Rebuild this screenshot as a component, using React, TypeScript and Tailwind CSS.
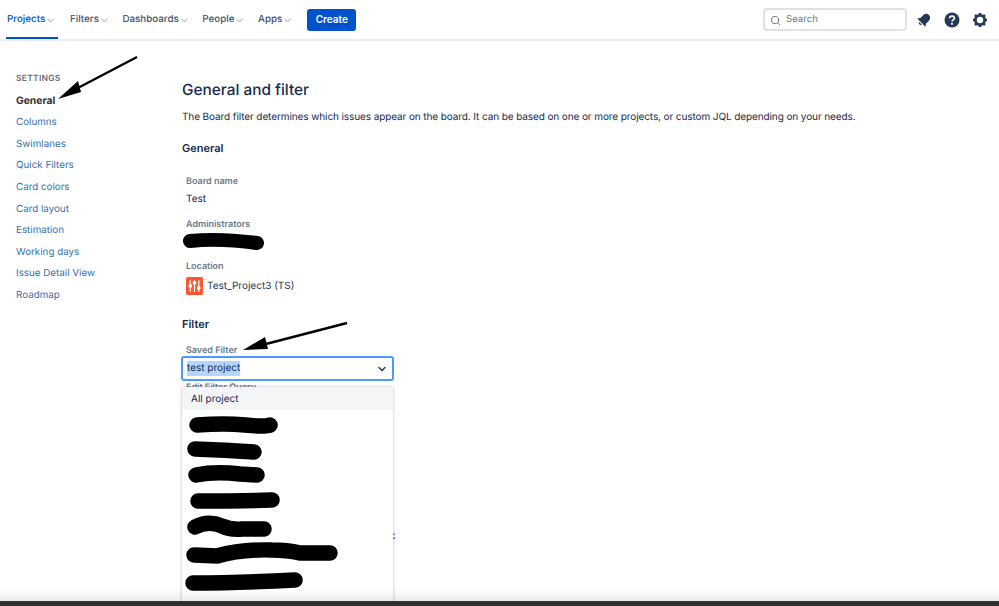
import { ChevronDown, Search } from 'lucide-react'

const navItems = [
	{ name: 'Projects', active: true },
	{ name: 'Filters' },
	{ name: 'Dashboards' },
	{ name: 'People' },
	{ name: 'Apps' },
]

const settingsLinks = ['Columns', 'Swimlanes', 'Quick Filters', 'Card colors', 'Card layout', 'Estimation', 'Working days', 'Issue Detail View', 'Roadmap']

// redacted rows in the open dropdown, coordinates relative to the menu
const scribbles = [
	'M15 39 Q43 37 63 39 T88 39',
	'M13 63 Q43 64 72 66',
	'M14 89 Q33 85 58 88 L75 89',
	'M16 115 Q58 115 90 114',
	'M13 141 Q26 134 40 140 Q48 144 60 143 L82 143',
	'M12 169 L35 170 Q60 163 90 164 Q105 164 118 167 L148 167',
	'M11 197 Q58 197 113 194',
]

function Field({ label, children }: { label: string; children: React.ReactNode }) {
	return (
		<div className="pl-1">
			<div className="text-[9px] leading-[14px] font-semibold text-[#6b778c]">{label}</div>
			{children}
		</div>
	)
}

export default function App() {
	return (
		<div className="relative h-[606px] w-[999px] overflow-hidden bg-white font-['Inter',sans-serif] [text-rendering:geometricPrecision] antialiased flex flex-col">
			{/* top nav */}
			<header className="h-[41px] shrink-0 flex items-center pl-1.5 pr-[11px] border-b-2 border-[#ebecf0]">
				<nav className="flex items-center h-full gap-[12.5px]">
					{navItems.map((item) => (
						<div
							key={item.name}
							className={
								item.active
									? 'h-full flex items-center pl-px pt-[3px] border-b-2 border-[#0052cc] w-[51.5px] text-[#0052cc] text-[9.8px] font-medium'
									: 'h-full flex items-center pt-[2px] text-[#42526e] text-[9.8px] font-medium'
							}
						>
							{item.name}
							<ChevronDown className="w-[11px] h-[11px] opacity-60 shrink-0" strokeWidth={2} />
						</div>
					))}
				</nav>
				<button className="ml-[14px] w-[49px] h-[22px] rounded-[3px] bg-[#0052cc] text-white text-[10px] font-semibold">Create</button>
				<div className="ml-auto w-[144px] h-[23px] flex items-center gap-[5px] pl-[5px] pt-px rounded-[4px] border-2 border-[#dfe1e6] text-[#6b778c] text-[9.6px]">
					<Search className="w-[11px] h-[11px] text-[#5e6c84]" strokeWidth={2} />
					Search
				</div>
				<div className="flex items-center ml-[9px] gap-3 text-[#253858]">
					<svg viewBox="0 0 16 16" className="w-4 h-4">
						<g transform="rotate(45 8 8)" fill="currentColor">
							<path d="M8 1 C5.2 1 4 3.2 4 5.6 V9 L2.2 11.8 H13.8 L12 9 V5.6 C12 3.2 10.8 1 8 1 Z" />
							<path d="M6.2 12.8 H9.8 C9.6 15 6.4 15 6.2 12.8 Z" />
						</g>
					</svg>
					<svg viewBox="0 0 16 16" className="w-4 h-4">
						<circle cx="8" cy="8" r="7.5" fill="currentColor" />
						<path d="M5.6 6.2 C5.7 3.4 10.4 3.4 10.4 6.2 C10.4 8 8 7.8 8 9.6" fill="none" stroke="white" strokeWidth="1.7" />
						<circle cx="8" cy="11.8" r="1.1" fill="white" />
					</svg>
					<svg viewBox="0 0 16 16" className="w-4 h-4" fill="none" stroke="currentColor">
						<circle cx="8" cy="8" r="4.6" strokeWidth="2.8" />
						<path
							strokeWidth="2.6"
							d="M8 1 V3.5 M8 12.5 V15 M1 8 H3.5 M12.5 8 H15 M3 3 L4.8 4.8 M11.2 11.2 L13 13 M13 3 L11.2 4.8 M4.8 11.2 L3 13"
						/>
					</svg>
				</div>
			</header>

			<div className="flex-1 flex min-h-0">
				{/* settings sidebar */}
				<aside className="w-[182px] shrink-0 pl-4 pt-[32px]">
					<div className="text-[8.5px] leading-[12px] font-semibold tracking-[0.03em] text-[#6b6f76]">SETTINGS</div>
					<div className="mt-[9px] text-[10.3px] leading-[14px] font-bold text-[#333]">General</div>
					<ul className="mt-[8px] space-y-[7.65px]">
						{settingsLinks.map((link) => (
							<li key={link} className="text-[9.8px] leading-[14px] text-[#3572b0]">
								{link}
							</li>
						))}
					</ul>
				</aside>

				{/* main content */}
				<main className="flex-1 pt-[38px]">
					<h1 className="text-[15.4px] leading-[22px] font-medium text-[#172b4d]">General and filter</h1>
					<p className="mt-[9px] text-[10px] leading-[14px] tracking-[-0.1px] text-[#172b4d]">
						The Board filter determines which issues appear on the board. It can be based on one or more projects, or custom JQL depending on your needs.
					</p>
					<h2 className="mt-[16px] text-[11px] leading-[16px] font-semibold text-[#172b4d]">General</h2>

					<div className="mt-[19px] flex flex-col gap-3">
						<Field label="Board name">
							<div className="mt-[3px] text-[10px] leading-[14px] text-[#172b4d]">Test</div>
						</Field>
						<Field label="Administrators">
							<svg viewBox="0 0 84 15" className="w-[84px] h-[15px] -ml-[5px] mt-px overflow-visible">
								<path d="M9 8 Q38 5 76 10" fill="none" stroke="black" strokeWidth="14" strokeLinecap="round" />
							</svg>
						</Field>
						<Field label="Location">
							<div className="mt-[3px] flex items-center gap-1 text-[10px] leading-[18px] text-[#253858]">
								<svg viewBox="0 0 18 18" className="w-[17px] h-[18px] rounded-[2px] bg-[#ff5630]">
									<g stroke="white" strokeWidth="1.3">
										<path d="M4.5 3 V15 M9 3 V15 M13.5 3 V15" />
									</g>
									<g fill="white">
										<circle cx="4.5" cy="9" r="2" />
										<circle cx="9" cy="5.5" r="2" />
										<circle cx="13.5" cy="11" r="2" />
									</g>
								</svg>
								Test_Project3 (TS)
							</div>
						</Field>
					</div>

					<h2 className="mt-[21px] text-[11px] leading-[16px] font-semibold text-[#172b4d]">Filter</h2>
					<div className="mt-[12px] pl-1 text-[9px] leading-[14px] font-semibold text-[#6b778c]">Saved Filter</div>
					<div className="relative -mt-[2px] -ml-px w-[213px]">
						<div className="h-[25px] flex items-center justify-between px-[4px] rounded-[3px] border-2 border-[#4c9aff] text-[10px] text-[#172b4d]">
							<span className="bg-[#b4d5fe]">test project</span>
							<ChevronDown className="w-3 h-3 text-[#253858]" strokeWidth={3} />
						</div>
						<div className="pl-[5px] text-[9px] leading-[14px] font-semibold text-[#6b778c]">Edit Filter Query</div>
						<span className="absolute left-[209px] top-[173px] text-[10px] text-[#253858] leading-[14px]">c</span>

						{/* open select menu */}
						<div className="absolute left-px top-[31px] w-[211px] h-[300px] bg-white shadow-[0_0_3px_rgba(9,30,66,0.3)]">
							<div className="h-[23px] flex items-center pl-[9px] pt-px bg-[#f4f5f7] text-[10px] text-[#172b4d]">All project</div>
							<svg viewBox="0 24 211 210" className="w-[211px] h-[210px]">
								{scribbles.map((d) => (
									<path key={d} d={d} fill="none" stroke="black" strokeWidth="15.5" strokeLinecap="round" />
								))}
							</svg>
						</div>
					</div>
				</main>
			</div>

			{/* fade and dark strip at the bottom of the capture */}
			<div className="absolute left-0 right-0 bottom-[5px] h-[12px] bg-gradient-to-b from-transparent to-[#00000014]" />
			<div className="relative h-[5px] shrink-0 bg-[#2f3133]" />

			{/* annotation arrows */}
			<svg viewBox="0 0 999 606" className="absolute inset-0 w-[999px] h-[606px] pointer-events-none">
				<path d="M137 57 L74 90" stroke="black" strokeWidth="2.4" />
				<path d="M58 99 L78 81 L81 92 Z" fill="black" />
				<path d="M347 323 L262 345" stroke="black" strokeWidth="2.4" />
				<path d="M243 350 L265 337 L268 349 Z" fill="black" />
			</svg>
		</div>
	)
}
